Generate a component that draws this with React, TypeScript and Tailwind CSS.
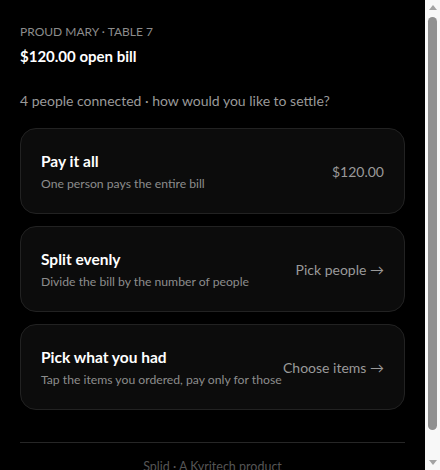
export default function App() {
  const cards = [
    { title: "Pay it all", desc: "One person pays the entire bill", right: "$120.00" },
    { title: "Split evenly", desc: "Divide the bill by the number of people", right: "Pick people →" },
    { title: "Pick what you had", desc: "Tap the items you ordered, pay only for those", right: "Choose items →" },
  ];
  return (
    <div className="min-h-screen bg-black text-white pr-[15px]" style={{ fontFamily: 'Lato, "Noto Sans", sans-serif' }}>
      <div className="px-5 pt-[22px] pb-[36px]">
        <div className="text-[12px] leading-5 text-[#8c8c8c]">PROUD MARY · TABLE 7</div>
        <div className="mt-[3px] text-[15px] leading-[22px] font-bold text-white">$120.00 open bill</div>
        <div className="mt-[24px] text-[14px] leading-5 text-[#9a9a9a]">
          4 people connected · how would you like to settle?
        </div>
        <div className="mt-[17px] flex flex-col gap-3">
          {cards.map((c) => (
            <div
              key={c.title}
              className="flex items-center justify-between gap-1 rounded-2xl border border-[#222] bg-[#0c0c0c] px-5 py-5"
            >
              <div className="flex flex-col min-w-0">
                <div className="text-[15.5px] leading-6 font-bold text-white">{c.title}</div>
                <div className="mt-[2px] whitespace-nowrap text-[12.2px] leading-[18px] text-[#8c8c8c]">{c.desc}</div>
              </div>
              <div className="shrink-0 text-[14px] text-[#9a9a9a]">{c.right}</div>
            </div>
          ))}
        </div>
        <div className="mt-8 border-t border-[#262626] pt-[15px] text-center text-[12.5px] leading-[18px] text-[#555]">
          Splid · A Kyritech product
        </div>
      </div>
      <div className="fixed right-0 top-0 flex h-screen w-[15px] flex-col items-center bg-[#f8f8f8]">
        <div className="mt-[5px] h-0 w-0 border-x-[4px] border-b-[5px] border-x-transparent border-b-[#a3a3a3]" />
        <div className="mt-[7px] w-[9px] flex-1 rounded-full bg-[#909090]" />
        <div className="mt-[30px] mb-[5px] h-0 w-0 border-x-[4px] border-t-[5px] border-x-transparent border-t-[#a3a3a3]" />
      </div>
    </div>
  );
}
